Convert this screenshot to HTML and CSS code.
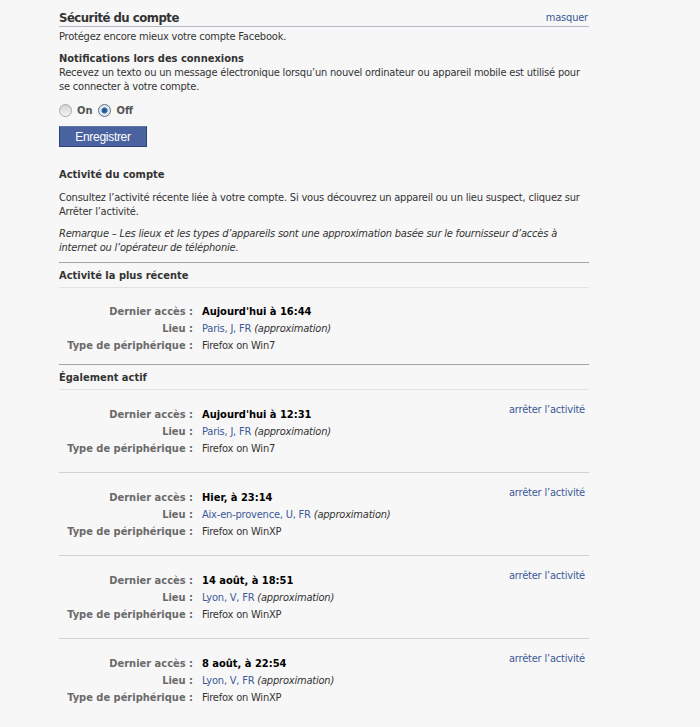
FILE: index.html
```html
<!DOCTYPE html>
<html lang="fr">
<head>
<meta charset="utf-8">
<title>Sécurité du compte</title>
<link rel="stylesheet" href="styles.css">
</head>
<body>
<div class="panel">
  <div class="panel-head">
    <h2 class="panel-title">Sécurité du compte</h2>
    <a class="link" href="#">masquer</a>
  </div>
  <p class="intro">Protégez encore mieux votre compte Facebook.</p>

  <h3 class="sub-title">Notifications lors des connexions</h3>
  <p class="text">Recevez un texto ou un message électronique lorsqu’un nouvel ordinateur ou appareil mobile est utilisé pour se connecter à votre compte.</p>

  <div class="radios">
    <label class="radio"><span class="radio-dot"></span>On</label>
    <label class="radio"><span class="radio-dot checked"></span>Off</label>
  </div>
  <button class="btn" type="button">Enregistrer</button>

  <h3 class="sub-title activity-title">Activité du compte</h3>
  <p class="text para">Consultez l’activité récente liée à votre compte. Si vous découvrez un appareil ou un lieu suspect, cliquez sur Arrêter l’activité.</p>
  <p class="text para note"><em>Remarque – Les lieux et les types d’appareils sont une approximation basée sur le fournisseur d’accès à internet ou l’opérateur de téléphonie.</em></p>

  <div class="section-head">Activité la plus récente</div>
  <div class="entry entry-recent">
    <div class="row"><span class="label">Dernier accès :</span><span class="value strong">Aujourd'hui à 16:44</span></div>
    <div class="row"><span class="label">Lieu :</span><span class="value"><a class="link" href="#">Paris, J, FR</a> <em>(approximation)</em></span></div>
    <div class="row"><span class="label">Type de périphérique :</span><span class="value">Firefox on Win7</span></div>
  </div>

  <div class="section-head">Également actif</div>
  <div class="entry">
    <a class="link stop" href="#">arrêter l’activité</a>
    <div class="row"><span class="label">Dernier accès :</span><span class="value strong">Aujourd'hui à 12:31</span></div>
    <div class="row"><span class="label">Lieu :</span><span class="value"><a class="link" href="#">Paris, J, FR</a> <em>(approximation)</em></span></div>
    <div class="row"><span class="label">Type de périphérique :</span><span class="value">Firefox on Win7</span></div>
  </div>
  <div class="entry">
    <a class="link stop" href="#">arrêter l’activité</a>
    <div class="row"><span class="label">Dernier accès :</span><span class="value strong">Hier, à 23:14</span></div>
    <div class="row"><span class="label">Lieu :</span><span class="value"><a class="link" href="#">Aix-en-provence, U, FR</a> <em>(approximation)</em></span></div>
    <div class="row"><span class="label">Type de périphérique :</span><span class="value">Firefox on WinXP</span></div>
  </div>
  <div class="entry">
    <a class="link stop" href="#">arrêter l’activité</a>
    <div class="row"><span class="label">Dernier accès :</span><span class="value strong">14 août, à 18:51</span></div>
    <div class="row"><span class="label">Lieu :</span><span class="value"><a class="link" href="#">Lyon, V, FR</a> <em>(approximation)</em></span></div>
    <div class="row"><span class="label">Type de périphérique :</span><span class="value">Firefox on WinXP</span></div>
  </div>
  <div class="entry">
    <a class="link stop" href="#">arrêter l’activité</a>
    <div class="row"><span class="label">Dernier accès :</span><span class="value strong">8 août, à 22:54</span></div>
    <div class="row"><span class="label">Lieu :</span><span class="value"><a class="link" href="#">Lyon, V, FR</a> <em>(approximation)</em></span></div>
    <div class="row"><span class="label">Type de périphérique :</span><span class="value">Firefox on WinXP</span></div>
  </div>
</div>
</body>
</html>
```

FILE: styles.css
```css
html, body {
  margin: 0;
  padding: 0;
  background: #f7f7f7;
}
body {
  font-family: "DejaVu Sans Condensed", "DejaVu Sans", "Liberation Sans", sans-serif;
  font-size: 11px;
  color: #333;
  letter-spacing: -0.2px;
}
.panel {
  width: 530px;
  margin-left: 59px;
}
.link {
  color: #3b5998;
  text-decoration: none;
}
.panel-head {
  display: flex;
  justify-content: space-between;
  align-items: center;
  margin-top: 10px;
  line-height: 16px;
  border-bottom: 1px solid #b4b9c8;
}
.panel-head .link {
  margin-right: 1px;
}
.panel-title {
  margin: 0;
  font-size: 13px;
  font-weight: bold;
  color: #333;
  letter-spacing: -0.5px;
}
.intro {
  margin: 3px 0 0;
  line-height: 14px;
}
.sub-title {
  margin: 8px 0 0;
  font-size: 11px;
  line-height: 14px;
  font-weight: bold;
  color: #333;
  letter-spacing: 0;
}
.text {
  margin: 0;
  line-height: 14px;
}
.radios {
  display: flex;
  align-items: center;
  gap: 6px;
  margin-top: 8px;
  height: 16px;
  font-weight: bold;
  color: #555;
  letter-spacing: 0;
}
.radio {
  display: flex;
  align-items: center;
  gap: 5px;
}
.radio-dot {
  width: 13px;
  height: 13px;
  border-radius: 50%;
  border: 1px solid #a9a9a9;
  background: linear-gradient(#d2d2d2, #f6f6f6);
  box-sizing: border-box;
}
.radio-dot.checked {
  border-color: #5c6f85;
  background: radial-gradient(circle, #1a4f86 0, #2b6aa8 2.5px, #e9eef4 3.6px, #cfd8e2 100%);
}
.btn {
  display: block;
  margin-top: 8px;
  width: 88px;
  height: 21px;
  padding: 0;
  border: 1px solid #29447e;
  border-top-color: #5f78ab;
  background: #4a62a0;
  color: #fff;
  font-family: "Liberation Sans", Arial, sans-serif;
  font-size: 12px;
  letter-spacing: -0.3px;
}
.activity-title {
  margin-top: 21px;
}
.para {
  margin-top: 9px;
}
.note {
  margin-top: 8px;
}
.section-head {
  margin-top: 7px;
  border-top: 1px solid #a3a3a3;
  border-bottom: 1px solid #e3e3e3;
  padding: 6px 0 4px;
  line-height: 14px;
  font-weight: bold;
  color: #333;
  letter-spacing: 0;
}
.entry {
  position: relative;
  padding: 16px 0 15px;
  border-bottom: 1px solid #d4d4d4;
}
.entry:last-child {
  border-bottom: none;
}
.entry-recent {
  padding: 15px 0 3px;
  border-bottom: none;
}
.row {
  display: flex;
  line-height: 17px;
}
.label {
  width: 134px;
  text-align: right;
  font-weight: bold;
  color: #6a6a6a;
  flex-shrink: 0;
  letter-spacing: 0;
}
.value {
  margin-left: 9px;
}
.value.strong {
  font-weight: bold;
  color: #000;
  letter-spacing: 0;
}
.value em {
  color: #333;
}
.stop {
  position: absolute;
  right: 4px;
  top: 13px;
  line-height: 14px;
}
```
